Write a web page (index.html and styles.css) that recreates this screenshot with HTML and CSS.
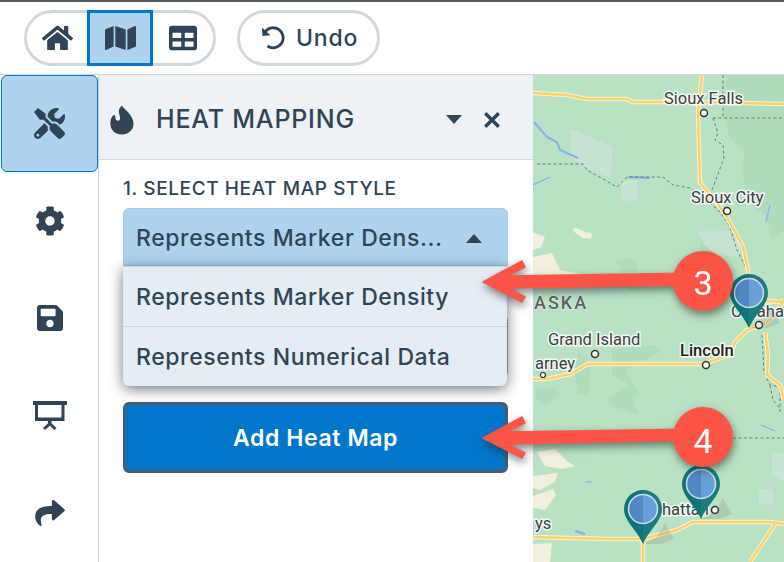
FILE: index.html
```html
<!DOCTYPE html>
<html lang="en">
<head>
<meta charset="utf-8">
<title>Heat Mapping</title>
<link rel="stylesheet" href="styles.css">
</head>
<body>
<div class="page">
  <header class="toolbar">
    <div class="segment">
      <button class="seg-btn seg-home"><svg class="ico ico-home" viewBox="0 0 576 512"><path d="M280.37 148.26L96 300.11V464a16 16 0 0 0 16 16l112.06-.29a16 16 0 0 0 15.92-16V368a16 16 0 0 1 16-16h64a16 16 0 0 1 16 16v95.64a16 16 0 0 0 16 16.05L464 480a16 16 0 0 0 16-16V300L295.67 148.26a12.19 12.19 0 0 0-15.3 0zM571.6 251.47L488 182.56V44.05a12 12 0 0 0-12-12h-56a12 12 0 0 0-12 12v72.61L318.47 43a48 48 0 0 0-61 0L4.34 251.47a12 12 0 0 0-1.6 16.9l25.5 31A12 12 0 0 0 45.15 301l235.22-193.74a12.19 12.19 0 0 1 15.3 0L530.9 301a12 12 0 0 0 16.9-1.6l25.5-31a12 12 0 0 0-1.7-16.93z"/></svg></button>
      <button class="seg-btn seg-map"><svg class="ico ico-map" viewBox="0 0 576 512"><path d="M0 117.66v346.32c0 11.32 11.43 19.06 21.94 14.86L160 416V32L20.12 87.95A32.006 32.006 0 0 0 0 117.66zM192 416l192 64V96L192 32v384zM554.06 33.16L416 96v384l139.88-55.95A31.996 31.996 0 0 0 576 394.34V48.02c0-11.32-11.43-19.06-21.94-14.86z"/></svg></button>
      <button class="seg-btn seg-table"><svg class="ico ico-table" viewBox="0 0 512 512"><path d="M464 32H48C21.49 32 0 53.49 0 80v352c0 26.51 21.49 48 48 48h416c26.51 0 48-21.49 48-48V80c0-26.51-21.49-48-48-48zM224 416H64v-96h160v96zm0-160H64v-96h160v96zm224 160H288v-96h160v96zm0-160H288v-96h160v96z"/></svg></button>
    </div>
    <button class="undo">
      <svg class="ico-undo" viewBox="0 0 26 26"><path class="undo-line" d="M5 7A10 10 0 1 1 7.500 21"/><path class="undo-head" d="M2 2.500L2.500 11L10.500 10.300Z"/></svg>
      <span>Undo</span>
    </button>
  </header>

  <div class="workspace">
    <nav class="rail">
      <div class="rail-item rail-active"><svg class="ico ico-tools" viewBox="0 0 512 512"><path d="M501.1 395.7L384 278.6c-23.1-23.1-57.6-27.6-85.4-13.9L192 158.1V96L64 0 0 64l96 128h62.1l106.6 106.6c-13.6 27.8-9.2 62.3 13.9 85.4l117.1 117.1c14.6 14.6 38.2 14.6 52.7 0l52.7-52.7c14.5-14.6 14.5-38.2 0-52.7zM331.7 225c28.3 0 54.9 11 74.9 31l19.4 19.4c15.8-6.9 30.8-16.5 43.8-29.5 37.1-37.1 49.7-89.3 37.9-136.7-2.2-9-13.5-12.1-20.1-5.5l-74.4 74.4-67.9-11.3L334 98.9l74.4-74.4c6.6-6.6 3.4-17.9-5.7-20.2-47.4-11.7-99.6.9-136.6 37.9-28.5 28.5-41.9 66.1-41.2 103.6l82.1 82.1c8.1-1.9 16.5-2.9 24.7-2.9zm-103.9 82l-56.7-56.7L18.7 402.8c-25 25-25 65.5 0 90.5s65.5 25 90.5 0l123.6-123.6c-7.6-19.9-9.9-41.6-5-62.7zM64 472c-13.2 0-24-10.8-24-24 0-13.3 10.7-24 24-24s24 10.7 24 24c0 13.2-10.7 24-24 24z"/></svg></div>
      <div class="rail-item"><svg class="ico ico-cog" viewBox="0 0 512 512"><path d="M487.4 315.7l-42.6-24.6c4.3-23.2 4.3-47 0-70.2l42.6-24.6c4.9-2.8 7.1-8.6 5.5-14-11.1-35.6-30-67.8-54.7-94.6-3.8-4.1-10-5.1-14.8-2.3L380.8 110c-17.9-15.4-38.5-27.3-60.8-35.1V25.8c0-5.6-3.9-10.5-9.4-11.7-36.7-8.2-74.3-7.8-109.2 0-5.5 1.2-9.4 6.1-9.4 11.7V75c-22.2 7.9-42.8 19.8-60.8 35.1L88.7 85.5c-4.9-2.8-11-1.9-14.8 2.3-24.7 26.7-43.6 58.9-54.7 94.6-1.7 5.4.6 11.2 5.5 14L67.3 221c-4.3 23.2-4.3 47 0 70.2l-42.6 24.6c-4.9 2.8-7.1 8.6-5.5 14 11.1 35.6 30 67.8 54.7 94.6 3.8 4.1 10 5.1 14.8 2.3l42.6-24.6c17.9 15.4 38.5 27.3 60.8 35.1v49.2c0 5.6 3.9 10.5 9.4 11.7 36.7 8.2 74.3 7.8 109.2 0 5.5-1.2 9.4-6.1 9.4-11.7v-49.2c22.2-7.9 42.8-19.8 60.8-35.1l42.6 24.6c4.9 2.8 11 1.9 14.8-2.3 24.7-26.7 43.6-58.9 54.7-94.6 1.5-5.5-.7-11.3-5.6-14.1zM256 336c-44.1 0-80-35.9-80-80s35.9-80 80-80 80 35.9 80 80-35.9 80-80 80z"/></svg></div>
      <div class="rail-item"><svg class="ico ico-save" viewBox="0 32 448 448"><path d="M433.941 129.941l-83.882-83.882A48 48 0 0 0 316.118 32H48C21.49 32 0 53.49 0 80v352c0 26.51 21.49 48 48 48h352c26.51 0 48-21.49 48-48V163.882a48 48 0 0 0-14.059-33.941zM224 416c-35.346 0-64-28.654-64-64 0-35.346 28.654-64 64-64s64 28.654 64 64c0 35.346-28.654 64-64 64zm96-304.52V212c0 6.627-5.373 12-12 12H76c-6.627 0-12-5.373-12-12V108c0-6.627 5.373-12 12-12h228.52c3.183 0 6.235 1.264 8.485 3.515l3.48 3.48A11.996 11.996 0 0 1 320 111.48z"/></svg></div>
      <div class="rail-item"><svg class="ico ico-board" viewBox="0 0 34 30"><path d="M0 0H34V4H31.500V20H18.500V22.300L23.500 27L21.500 29L16.750 24.800L12 29L10 27L15 22.300V20H2V4H0ZM5 4V16.500H28.500V4Z" fill-rule="evenodd"/></svg></div>
      <div class="rail-item"><svg class="ico ico-share" viewBox="0 32 512 448"><path d="M503.691 189.836L327.687 37.851C312.281 24.546 288 35.347 288 56.015v80.053C127.371 137.907 0 170.1 0 322.326c0 61.441 39.581 122.309 83.333 154.132 13.653 9.931 33.111-2.533 28.077-18.631C66.066 312.814 132.917 274.316 288 272.085V360c0 20.7 24.3 31.453 39.687 18.164l176.004-152c11.071-9.562 11.086-26.753 0-36.328z"/></svg></div>
    </nav>

    <section class="panel">
      <div class="panel-head">
        <svg class="ico ico-fire" viewBox="0 0 24 30"><path d="M12 0.500C13 4 23.500 9 23.500 19C23.500 25 18 29.500 12 29.500C5 29.500 0.300 25 0.300 18.500C0.300 14 2 11 4 10C5 9.700 5.300 11 5.300 12C5.300 15 7 16.300 9 15.500C12 14 8 8.500 9 5C9.500 3 11 1.500 12 0.500Z"/></svg>
        <h1 class="panel-title">HEAT MAPPING</h1>
        <span class="caret-down"></span>
        <svg class="ico-close" viewBox="0 0 16 16"><path d="M2 2L14 14M14 2L2 14"/></svg>
      </div>
      <div class="panel-body">
        <div class="field-label">1. SELECT HEAT MAP STYLE</div>
        <div class="select-wrap">
          <div class="select">
            <span class="select-value">Represents Marker Dens...</span>
            <span class="caret-up"></span>
          </div>
          <div class="hidden-field"></div>
          <ul class="menu">
            <li class="menu-item">Represents Marker Density</li>
            <li class="menu-item">Represents Numerical Data</li>
          </ul>
        </div>
        <button class="add-btn">Add Heat Map</button>
      </div>
    </section>

    <div class="map">
      <svg class="map-svg" viewBox="533 75 251 487">
        <defs>
          <g id="pin">
            <path class="pin-shadow" d="M0 35L14 28L22 14L31 30L18 35Z"/>
            <path class="pin-body" d="M-19 0A19 19 0 1 1 19 0C19 12 6 21 0 35C-6 21 -19 12 -19 0Z"/>
            <circle class="pin-fill" r="14.500"/>
            <path class="pin-light" d="M0 -14.500A14.500 14.500 0 0 1 0 14.500Z"/>
            <circle class="pin-ring" r="14.500"/>
            <path class="pin-tint" d="M0 -19A19 19 0 0 1 19 0C19 12 6 21 0 35Z"/>
          </g>
        </defs>
        <rect class="land" x="533" y="75" width="251" height="487"/>

        <path class="forest" d="M728 75L784 75L784 230L772 240L765 215L752 205L742 175L745 150L730 140L722 105Z"/>
        <path class="forest" d="M616 260L635 258L640 290L630 292Z"/>
        <path class="forest" d="M702 237L712 245L715 258L700 250Z"/>
        <path class="forest" d="M612 350L655 345L660 352L625 370L640 395L632 398L638 415L610 405L607 398L630 385L612 375Z"/>
        <path class="forest" d="M578 350L590 365L590 395L578 395L575 375Z"/>
        <path class="forest" d="M536 388L555 387L560 395L545 405L536 400Z"/>

        <path class="park" d="M572 130L612 147L610 177L585 167L572 157Z"/>
        <path class="park" d="M622 181H637V200H622Z"/>
        <path class="park" d="M699 232H730V240H739V255H718L705 245Z"/>
        <path class="park" d="M773 454H784V480L773 476Z"/>
        <path class="park" d="M759 490H772V503H759Z"/>

        <path class="sand" d="M533 232L545 237L541 247L533 250Z"/>
        <path class="sand" d="M574 227L585 232L592 233L591 239L582 238L573 231Z"/>
        <path class="sand" d="M533 257L552 253L560 270L580 274L581 276H533Z"/>
        <path class="sand" d="M537 452L555 449L568 462L575 466L562 469L545 466Z"/>
        <path class="sand" d="M533 476L558 473L555 482L540 490L533 488Z"/>
        <path class="sand" d="M533 496L553 489L556 495L545 510L533 508Z"/>
        <path class="sand" d="M533 544L552 543L550 562H533Z"/>

        <path class="water-line" d="M534 122L547 137L557 142L560 150L578 158"/>
        <path class="water-line thin" d="M533 185L550 177"/>
        <path class="water-line" d="M628 177L650 178"/>
        <path class="water-line thin" d="M726 214L733 228"/>
        <path class="water-line thin" d="M770 205L766 222"/>
        <path class="water-line thin" d="M761 425L775 431"/>
        <path class="water-line thin" d="M585 482L592 482"/>
        <path class="water-line" d="M575 531L585 534"/>

        <path class="border-line" d="M537 164L583 164L587 170L617 187L627 177L663 177L673 185L690 188L707 200L720 212L730 227L737 250L747 270"/>
        <path class="border-line" d="M723 75V117M713 118H784M713 118L718 133L715 140L723 145L724 158L712 190"/>
        <path class="border-line" d="M762 335L764 372L770 385L780 387M770 385L773 400L781 410M780 387V412"/>
        <path class="border-line" d="M733 438H784"/>

        <g class="roads-under">
          <path d="M533 93L567 95L587 99L627 99L633 102L697 102L784 104"/>
          <path d="M702 75L698 112L700 183L720 207L727 217L743 247L748 270L748 300"/>
          <path d="M750 300L784 302"/>
          <path d="M533 379L547 379L570 374L588 364L703 364L730 355L735 342L747 330L763 325L773 317L784 300"/>
          <path d="M765 332L768 355L767 375L780 385L784 400"/>
          <path d="M533 537L610 539L643 539L677 530L693 522L770 522L784 524"/>
          <path d="M643 540V562"/>
          <path d="M775 524L750 562"/>
        </g>
        <g class="roads">
          <path d="M533 93L567 95L587 99L627 99L633 102L697 102L784 104"/>
          <path d="M702 75L698 112L700 183L720 207L727 217L743 247L748 270L748 300"/>
          <path d="M750 300L784 302"/>
          <path d="M533 379L547 379L570 374L588 364L703 364L730 355L735 342L747 330L763 325L773 317L784 300"/>
          <path d="M765 332L768 355L767 375L780 385L784 400"/>
          <path d="M533 537L610 539L643 539L677 530L693 522L770 522L784 524"/>
          <path d="M643 540V562"/>
          <path d="M775 524L750 562"/>
        </g>

        <circle class="city" cx="704" cy="113" r="3.500"/>
        <circle class="city" cx="727" cy="211" r="3.500"/>
        <circle class="city" cx="595" cy="354" r="3.500"/>
        <circle class="city small" cx="543" cy="375" r="2.500"/>
        <circle class="city" cx="706" cy="365" r="3.500"/>
        <circle class="city" cx="759" cy="325" r="3.500"/>
        <circle class="city" cx="715" cy="510" r="3.500"/>

        <text class="label" x="664" y="104">Sioux Falls</text>
        <text class="label" x="691" y="203">Sioux City</text>
        <text class="label" x="731" y="317">Omaha</text>
        <text class="label" x="548" y="345">Grand Island</text>
        <text class="label" x="535" y="369">arney</text>
        <text class="label strong" x="680" y="356">Lincoln</text>
        <text class="label" x="662" y="515">hattan</text>
        <text class="label" x="535" y="529">ys</text>
        <text class="state" x="534" y="309">ASKA</text>

        <use href="#pin" x="749" y="293"/>
        <use href="#pin" x="701" y="484"/>
        <use href="#pin" x="643" y="509"/>
      </svg>
    </div>
  </div>

  <svg class="callouts" viewBox="0 0 784 562">
    <g class="callout">
      <path class="arrow" d="M483 282L522 261L525 267L507 276L700 273V285L507 288L525 297L522 302Z"/>
      <circle class="badge" cx="703" cy="281" r="30"/>
      <text class="badge-num" x="703" y="295">3</text>
    </g>
    <g class="callout">
      <path class="arrow" d="M483 438L522 417L525 423L507 432L700 429V440L507 444L525 453L522 458Z"/>
      <circle class="badge" cx="703" cy="437" r="30"/>
      <text class="badge-num" x="703" y="453">4</text>
    </g>
  </svg>
</div>
</body>
</html>
```

FILE: styles.css
```css
* { box-sizing: border-box; }
html, body { margin: 0; padding: 0; }
body { font-family: Inter, "Open Sans", sans-serif; color: #2f4557; background: #fff; overflow: hidden; }
button { font-family: inherit; color: inherit; background: none; padding: 0; margin: 0; cursor: pointer; }

.page { position: relative; width: 784px; height: 562px; border-top: 2px solid #59595c; display: flex; flex-direction: column; }

.toolbar { height: 73px; flex: none; display: flex; align-items: flex-start; gap: 21px; padding: 8px 0 0 24px; border-bottom: 1px solid #cfd8dd; }
.segment { width: 192px; height: 56px; display: flex; border: 3px solid #cfd8dd; border-radius: 28px; }
.seg-btn { height: 56px; margin-top: -3px; border: 0; display: flex; align-items: center; justify-content: center; }
.seg-home { width: 60px; }
.seg-map { width: 66px; background: #aed3ee; border: 3px solid #0077cc; }
.seg-table { width: 60px; }
.ico { display: block; fill: #2f4557; }
.ico-home { width: 31px; height: 28px; }
.ico-map { width: 31px; height: 28px; }
.ico-table { width: 28px; height: 28px; }

.undo { width: 143px; height: 56px; border: 3px solid #cfd8dd; border-radius: 28px; display: flex; align-items: center; gap: 10px; padding-left: 20px; font-size: 23px; font-weight: 500; letter-spacing: 0.8px; }
.ico-undo { width: 26px; height: 26px; }
.undo-line { fill: none; stroke: #2f4557; stroke-width: 2.800; }
.undo-head { fill: #2f4557; }

.workspace { flex: 1; display: flex; min-height: 0; }

.rail { width: 99px; flex: none; border-right: 1px solid #c8d6e2; display: flex; flex-direction: column; padding-left: 1px; }
.rail-item { height: 97.500px; width: 97px; display: flex; align-items: center; justify-content: center; }
.rail-active { height: 97px; background: #aed3ee; border: 1px solid #0077cc; border-radius: 6px; }
.ico-tools { width: 31px; height: 31px; }
.ico-cog { width: 30px; height: 30px; }
.ico-save { width: 26px; height: 26px; }
.ico-board { width: 34px; height: 30px; }
.ico-share { width: 30px; height: 26px; }

.panel { width: 434px; flex: none; display: flex; flex-direction: column; }
.panel-head { height: 85px; flex: none; background: #eef1f5; border-bottom: 1px solid #cfd8dd; display: flex; align-items: center; padding: 5px 0 0 11px; }
.ico-fire { width: 24px; height: 30px; }
.panel-title { margin: 0 0 0 22px; width: 290px; font-size: 25px; font-weight: 500; letter-spacing: 0.8px; line-height: 1; }
.caret-down { width: 0; height: 0; border-left: 8px solid transparent; border-right: 8px solid transparent; border-top: 9px solid #2f4557; }
.ico-close { width: 18px; height: 18px; margin-left: 21px; fill: none; stroke: #2f4557; stroke-width: 3; }

.panel-body { padding: 19px 25px 0 24px; }
.field-label { font-size: 19px; font-weight: 500; line-height: 20px; letter-spacing: 0.6px; height: 29px; white-space: nowrap; }
.select-wrap { position: relative; height: 194px; }
.select { height: 58px; background: #aed3ee; border: 1px solid #a3c9e4; border-radius: 6px 6px 0 0; display: flex; align-items: center; justify-content: space-between; padding: 2px 25px 0 12px; font-size: 23px; font-weight: 500; letter-spacing: 0.6px; }
.select-value { white-space: nowrap; }
.caret-up { width: 0; height: 0; border-left: 8px solid transparent; border-right: 8px solid transparent; border-bottom: 9px solid #2f4557; }
.hidden-field { margin-top: 50px; height: 60px; border: 1px solid #9aa7b2; border-radius: 4px; }
.menu { position: absolute; left: 0; right: 1px; top: 58px; margin: 0; padding: 0; list-style: none; background: #e4ecf4; border-radius: 0 0 6px 6px; box-shadow: 0 3px 14px rgba(20, 30, 40, 0.6); }
.menu-item { height: 60px; padding-left: 13px; display: flex; align-items: center; font-size: 23px; font-weight: 500; letter-spacing: 0.6px; white-space: nowrap; border-top: 1px solid #c8d6e2; }
.add-btn { display: block; width: 385px; height: 71px; background: #0077cc; border: 3px solid #4a5d6e; border-radius: 6px; color: #fff; font-size: 23px; font-weight: 600; letter-spacing: 0.6px; }

.map { flex: 1; min-width: 0; }
.map-svg { display: block; width: 100%; height: 100%; }
.land { fill: #b9e1c4; }
.forest { fill: #afdcbc; }
.park { fill: #c6e4d2; stroke: #cfe3d7; stroke-width: 1; }
.sand { fill: #f3efdf; }
.water-line { fill: none; stroke: #7fb2ee; stroke-width: 2; }
.water-line.thin { stroke-width: 1.200; }
.border-line { fill: none; stroke: #6d7a74; stroke-width: 1; stroke-dasharray: 3 2.500; }
.roads-under path { fill: none; stroke: #fff3cc; stroke-width: 4.500; }
.roads path { fill: none; stroke: #f8d26e; stroke-width: 2.500; }
.city { fill: #fff; stroke: #333; stroke-width: 1.500; }
.city.small { stroke-width: 1.200; }
.label { font-family: Roboto, sans-serif; font-size: 16.500px; fill: #3c4043; stroke: #fff; stroke-width: 3px; stroke-opacity: 0.8; paint-order: stroke; }
.label.strong { font-weight: 500; fill: #222; }
.state { font-family: Roboto, sans-serif; font-size: 18px; font-weight: 500; letter-spacing: 2px; fill: #5f6368; stroke: #fff; stroke-width: 2px; stroke-opacity: 0.35; paint-order: stroke; }
.pin-shadow { fill: rgba(110, 120, 110, 0.2); }
.pin-body { fill: #0d7478; }
.pin-tint { fill: rgba(255, 255, 255, 0.06); }
.pin-fill { fill: #5387c4; }
.pin-light { fill: #5e9ad6; }
.pin-ring { fill: none; stroke: #c7dced; stroke-width: 1.500; }

.callouts { position: absolute; left: 0; top: -2px; width: 784px; height: 562px; pointer-events: none; }
.callout { filter: drop-shadow(1px 4px 4px rgba(30, 40, 40, 0.55)); }
.arrow { fill: #fc5546; stroke: #fc5546; stroke-width: 1.500; stroke-linejoin: round; }
.badge { fill: #fc5546; }
.badge-num { font-family: Roboto, "Liberation Sans", sans-serif; font-size: 34px; fill: #fff; text-anchor: middle; }
```
